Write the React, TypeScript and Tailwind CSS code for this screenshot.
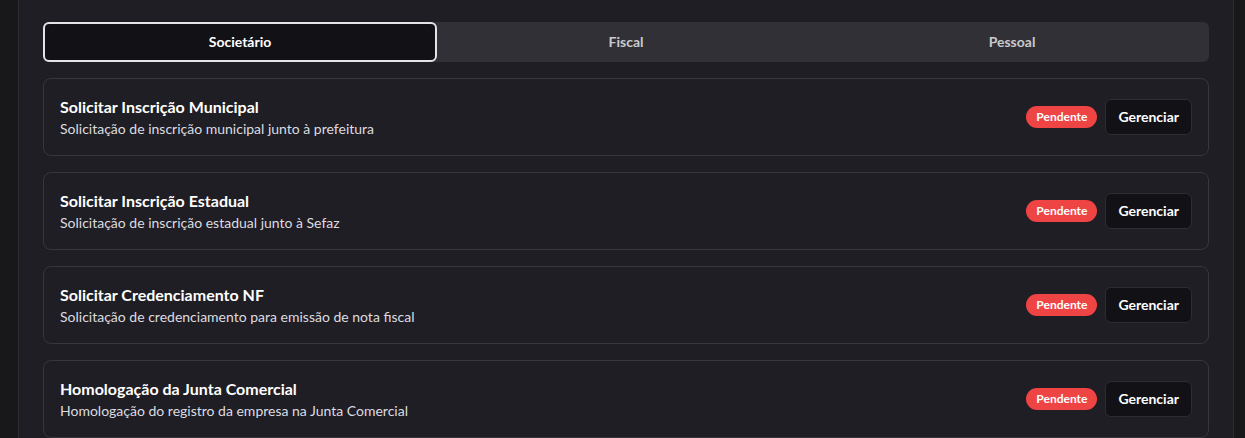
const tasks = [
  {
    title: "Solicitar Inscrição Municipal",
    desc: "Solicitação de inscrição municipal junto à prefeitura",
  },
  {
    title: "Solicitar Inscrição Estadual",
    desc: "Solicitação de inscrição estadual junto à Sefaz",
  },
  {
    title: "Solicitar Credenciamento NF",
    desc: "Solicitação de credenciamento para emissão de nota fiscal",
  },
  {
    title: "Homologação da Junta Comercial",
    desc: "Homologação do registro da empresa na Junta Comercial",
  },
];

const tabs = ["Societário", "Fiscal", "Pessoal"];

export default function App() {
  return (
    <div
      className="h-[438px] overflow-hidden bg-[#18181b] pl-[18px] pr-[11px] text-white"
      style={{ fontFamily: 'Lato, "Open Sans", sans-serif' }}
    >
      <div className="h-full border-x border-[#2c2c31] bg-[#1f1e24] px-6 pt-[22px]">
        <div className="grid h-10 grid-cols-[394px_1fr_1fr] rounded-md bg-[#313036]">
          {tabs.map((t, i) => (
            <button
              key={t}
              className={
                i === 0
                  ? "rounded-md border-2 border-[#e4e4e7] bg-[#121116] text-sm font-bold text-white"
                  : "mr-2 rounded-md text-sm font-bold text-[#c9c9ce]"
              }
            >
              {t}
            </button>
          ))}
        </div>
        <div className="mt-4 flex flex-col gap-4">
          {tasks.map((task) => (
            <div
              key={task.title}
              className="flex items-center justify-between rounded-lg border border-[#37363c] bg-[#1f1e24] p-4"
            >
              <div>
                <h3 className="text-base leading-6 font-bold text-white">
                  {task.title}
                </h3>
                <p className="text-sm leading-5 text-[#dcdce0]">{task.desc}</p>
              </div>
              <div className="flex items-center gap-2">
                <span className="rounded-full bg-[#ef4444] px-2.5 py-[3px] text-xs font-bold text-white">
                  Pendente
                </span>
                <button className="h-9 rounded-md border border-[#2e2d33] bg-[#121116] px-3 text-sm font-bold text-white">
                  Gerenciar
                </button>
              </div>
            </div>
          ))}
        </div>
      </div>
    </div>
  );
}
